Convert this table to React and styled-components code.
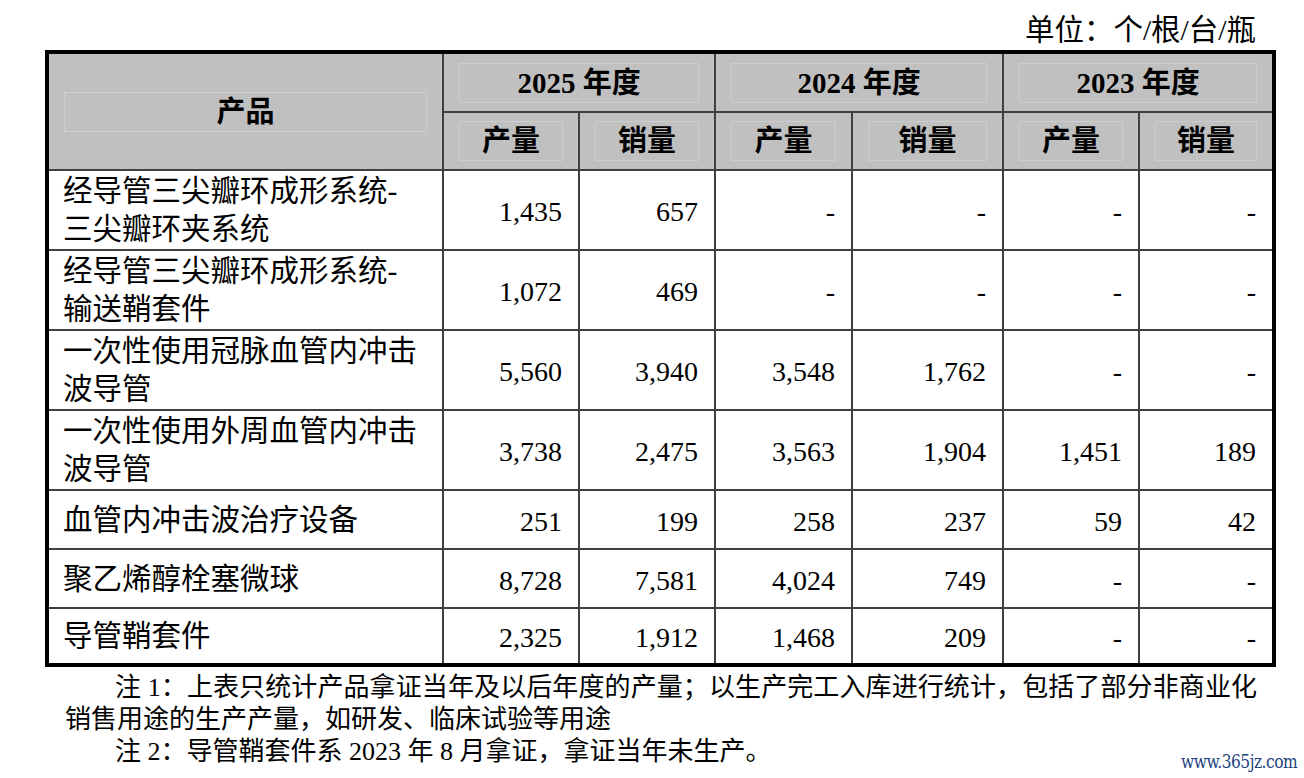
import styled, { createGlobalStyle } from 'styled-components'

const GlobalStyle = createGlobalStyle`
  html, body {
    margin: 0;
    padding: 0;
    background: #ffffff;
  }
  body {
    font-family: "Liberation Serif", "Noto Sans CJK SC", serif;
    color: #000000;
  }
`

const Page = styled.div`
  position: relative;
  width: 1304px;
  height: 778px;
  overflow: hidden;
  padding: 10px 0 0 45px;
  box-sizing: border-box;
`

const Unit = styled.div`
  width: 1229px;
  box-sizing: border-box;
  padding-right: 18px;
  text-align: right;
  font-size: 29.5px;
  line-height: 40px;
`

const Table = styled.table`
  width: 1229px;
  table-layout: fixed;
  border-collapse: collapse;
  border: 4px solid #000000;
`

const HeadCell = styled.th`
  background: #c0c0c0;
  border: 2px solid #404040;
  padding: 7px 15px;
  font-weight: bold;
  font-size: 29px;
  text-align: center;
  vertical-align: middle;
`

const HeadLabel = styled.span`
  display: block;
  border: 1px solid #cdcdcd;
  line-height: 38px;
`

const Row = styled.tr`
  height: ${p => p.$h}px;
`

const NameCell = styled.td`
  border: 2px solid #404040;
  padding: 0 10px 0 14px;
  font-size: 29.5px;
  line-height: 38px;
  vertical-align: middle;
  text-align: left;
`

const NumCell = styled.td`
  border: 2px solid #404040;
  padding: 4px 16px 0 8px;
  font-size: 28px;
  text-align: right;
  vertical-align: middle;
`

const Notes = styled.div`
  width: 1192px;
  margin: 5px 0 0 20px;
  font-size: 26px;
  line-height: 32px;
`

const Note = styled.p`
  margin: 0;
  text-indent: 50px;
  text-align: justify;
`

const Watermark = styled.div`
  position: absolute;
  right: 7px;
  bottom: 6px;
  font-family: "DejaVu Serif", serif;
  font-size: 18px;
  letter-spacing: -0.6px;
  color: #22427e;
  transform: scaleX(0.86);
  transform-origin: right bottom;
`

const years = ['2025', '2024', '2023']

const rows = [
  { name: ['经导管三尖瓣环成形系统-', '三尖瓣环夹系统'], h: 80, v: ['1,435', '657', '-', '-', '-', '-'] },
  { name: ['经导管三尖瓣环成形系统-', '输送鞘套件'], h: 80, v: ['1,072', '469', '-', '-', '-', '-'] },
  { name: ['一次性使用冠脉血管内冲击', '波导管'], h: 80, v: ['5,560', '3,940', '3,548', '1,762', '-', '-'] },
  { name: ['一次性使用外周血管内冲击', '波导管'], h: 80, v: ['3,738', '2,475', '3,563', '1,904', '1,451', '189'] },
  { name: ['血管内冲击波治疗设备'], h: 59, v: ['251', '199', '258', '237', '59', '42'] },
  { name: ['聚乙烯醇栓塞微球'], h: 59, v: ['8,728', '7,581', '4,024', '749', '-', '-'] },
  { name: ['导管鞘套件'], h: 57, v: ['2,325', '1,912', '1,468', '209', '-', '-'] },
]

const widths = [396, 136, 136, 137, 151, 136, 135]

export default function App() {
  return (
    <>
      <GlobalStyle />
      <Page>
        <Unit>单位：个/根/台/瓶</Unit>
        <Table>
          <colgroup>
            {widths.map((w, i) => <col key={i} style={{ width: w }} />)}
          </colgroup>
          <thead>
            <Row $h={60}>
              <HeadCell rowSpan={2}><HeadLabel>产品</HeadLabel></HeadCell>
              {years.map(y => (
                <HeadCell key={y} colSpan={2}><HeadLabel>{y} 年度</HeadLabel></HeadCell>
              ))}
            </Row>
            <Row $h={58}>
              {years.map(y => [
                <HeadCell key={y + 'p'}><HeadLabel>产量</HeadLabel></HeadCell>,
                <HeadCell key={y + 's'}><HeadLabel>销量</HeadLabel></HeadCell>,
              ])}
            </Row>
          </thead>
          <tbody>
            {rows.map((r, i) => (
              <Row key={i} $h={r.h}>
                <NameCell>
                  {r.name.map((line, j) => (
                    <span key={j}>{j > 0 && <br />}{line}</span>
                  ))}
                </NameCell>
                {r.v.map((n, j) => <NumCell key={j}>{n}</NumCell>)}
              </Row>
            ))}
          </tbody>
        </Table>
        <Notes>
          <Note>注 1：上表只统计产品拿证当年及以后年度的产量；以生产完工入库进行统计，包括了部分非商业化销售用途的生产产量，如研发、临床试验等用途</Note>
          <Note>注 2：导管鞘套件系 2023 年 8 月拿证，拿证当年未生产。</Note>
        </Notes>
        <Watermark>www.365jz.com</Watermark>
      </Page>
    </>
  )
}
